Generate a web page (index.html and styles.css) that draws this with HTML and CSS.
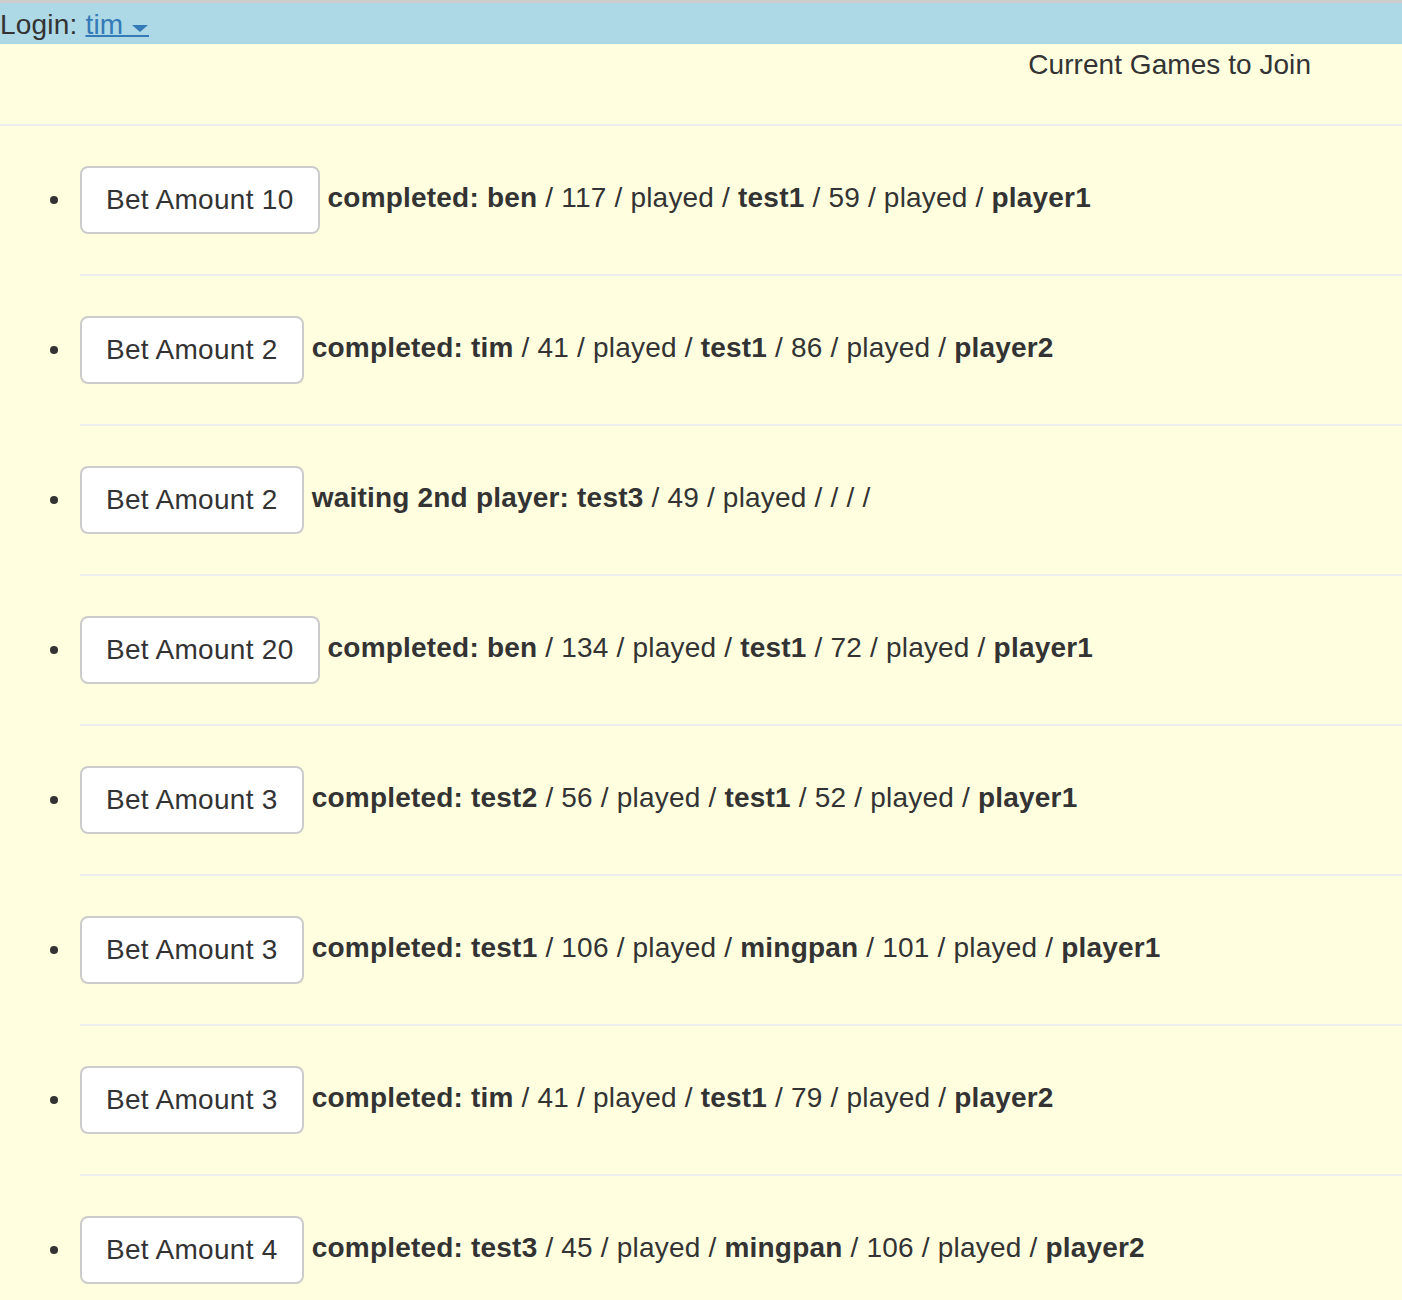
FILE: index.html
```html
<!DOCTYPE html>
<html>
<head>
<meta charset="utf-8">
<link rel="stylesheet" href="styles.css">
</head>
<body>
<div class="topbar">Login: <a class="user" href="#">tim<svg class="caret" width="26" height="13" viewBox="0 0 26 13"><polygon points="9,1 25,1 17,8" fill="#337ab7"/><rect x="0" y="11" width="26" height="2" fill="#337ab7"/></svg></a></div>
<div class="heading"><span>Current Games to Join</span></div>
<hr class="rule">
<ul class="games">
  <li><button class="btn">Bet Amount 10</button> <b>completed: ben</b> / 117 / played / <b>test1</b> / 59 / played / <b>player1</b><hr class="rule"></li>
  <li><button class="btn">Bet Amount 2</button> <b>completed: tim</b> / 41 / played / <b>test1</b> / 86 / played / <b>player2</b><hr class="rule"></li>
  <li><button class="btn">Bet Amount 2</button> <b>waiting 2nd player: test3</b> / 49 / played / / / /<hr class="rule"></li>
  <li><button class="btn">Bet Amount 20</button> <b>completed: ben</b> / 134 / played / <b>test1</b> / 72 / played / <b>player1</b><hr class="rule"></li>
  <li><button class="btn">Bet Amount 3</button> <b>completed: test2</b> / 56 / played / <b>test1</b> / 52 / played / <b>player1</b><hr class="rule"></li>
  <li><button class="btn">Bet Amount 3</button> <b>completed: test1</b> / 106 / played / <b>mingpan</b> / 101 / played / <b>player1</b><hr class="rule"></li>
  <li><button class="btn">Bet Amount 3</button> <b>completed: tim</b> / 41 / played / <b>test1</b> / 79 / played / <b>player2</b><hr class="rule"></li>
  <li><button class="btn">Bet Amount 4</button> <b>completed: test3</b> / 45 / played / <b>mingpan</b> / 106 / played / <b>player2</b><hr class="rule"></li>
</ul>
</body>
</html>
```
FILE: styles.css
```css
html, body {
  margin: 0;
  padding: 0;
}
body {
  background: #ffffe0;
  color: #333;
  font-family: "Liberation Sans", Arial, Helvetica, sans-serif;
  font-size: 28px;
  line-height: 40px;
  letter-spacing: 0.2px;
  border-top: 3px solid #cdcdcd;
}
.topbar {
  background: #add8e6;
  height: 39px;
  padding-top: 2px;
}
.user {
  color: #337ab7;
  text-decoration: underline;
  text-decoration-thickness: 2px;
  text-underline-offset: 1px;
}
.caret {
  display: inline-block;
  vertical-align: -3px;
}
.heading {
  display: flex;
  justify-content: flex-end;
  padding-right: 91px;
  padding-top: 1px;
  height: 39px;
  letter-spacing: 0.05px;
}
.rule {
  margin: 40px 0;
  border: 0;
  border-top: 2px solid #eee;
  height: 0;
}
.games {
  margin: 0;
  padding-left: 80px;
  list-style: none;
}
.games li::before {
  content: "";
  display: inline-block;
  width: 8px;
  height: 8px;
  border-radius: 50%;
  background: #333;
  margin-left: -30px;
  margin-right: 22px;
  vertical-align: middle;
}
.btn {
  font-family: inherit;
  font-size: 28px;
  line-height: 40px;
  letter-spacing: 0.3px;
  color: #333;
  background: #fff;
  border: 2px solid #ccc;
  border-radius: 8px;
  padding: 12px 24px;
  margin: 0;
  vertical-align: middle;
}
b {
  font-weight: bold;
}
```
